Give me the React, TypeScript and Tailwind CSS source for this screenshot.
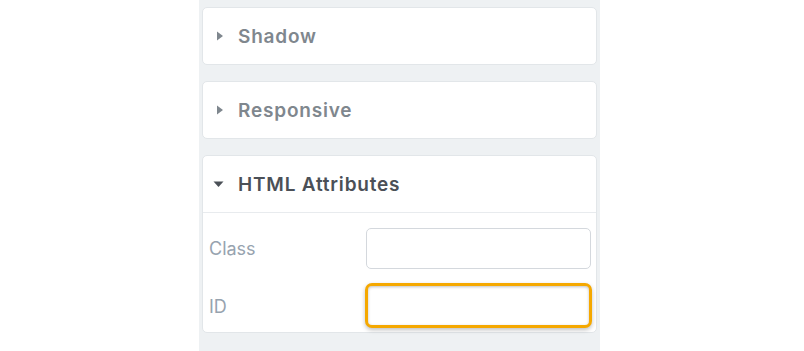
import { useState } from 'react'

function Caret({ open }: { open?: boolean }) {
  return open ? (
    <svg width="11" height="10" viewBox="0 0 11 10" className="shrink-0">
      <path d="M0.5 2.5 L10.5 2.5 L5.5 8 Z" fill="#4b5057" />
    </svg>
  ) : (
    <svg width="8" height="10" viewBox="0 0 8 10" className="shrink-0 ml-[2px]">
      <path d="M1 0.5 L7 5 L1 9.5 Z" fill="#7f878e" />
    </svg>
  )
}

function Section({ title }: { title: string }) {
  return (
    <div className="h-[58px] bg-white border border-[#e2e6e9] rounded-[5px] flex items-center pl-[11px] gap-[14px]">
      <Caret />
      <span className="pt-[2px] text-[19px] font-semibold text-[#7f878e] tracking-[0.8px]">{title}</span>
    </div>
  )
}

export default function App() {
  const [cls, setCls] = useState('')
  const [id, setId] = useState('')

  return (
    <div className="w-[804px] h-[351px] bg-white font-['Inter',sans-serif]">
      <div className="ml-[199px] w-[401px] h-full bg-[#eef1f3] px-[3px] pt-[7px] flex flex-col gap-[16px]">
        <Section title="Shadow" />
        <Section title="Responsive" />

        <div className="bg-white border border-[#e2e6e9] rounded-[5px]">
          <div className="h-[57px] flex items-center pl-[10px] gap-[14px] border-b border-[#e8ebee]">
            <Caret open />
            <span className="pt-[2px] text-[19px] font-semibold text-[#4b5057] tracking-[0.8px]">HTML Attributes</span>
          </div>
          <div className="pl-[6px] pr-[5px] pt-[15px] pb-[4px] flex flex-col gap-[14px]">
            <div className="flex items-center">
              <label className="shrink-0 w-[157px] text-[18px] text-[#97a3af]">Class</label>
              <input
                value={cls}
                onChange={(e) => setCls(e.target.value)}
                className="flex-1 min-w-0 h-[41px] rounded-[5px] border border-[#d4d8dd] bg-white outline-none"
              />
            </div>
            <div className="flex items-center">
              <label className="shrink-0 w-[156px] text-[18px] text-[#97a3af] pt-[1px]">ID</label>
              <input
                value={id}
                onChange={(e) => setId(e.target.value)}
                className="flex-1 min-w-0 -mr-[1px] h-[45px] rounded-[7px] border-[3px] border-[#f5a800] bg-white outline-none shadow-[inset_0_1px_3px_rgba(0,0,0,0.25),0_2px_4px_rgba(0,0,0,0.25)]"
              />
            </div>
          </div>
        </div>
      </div>
    </div>
  )
}
